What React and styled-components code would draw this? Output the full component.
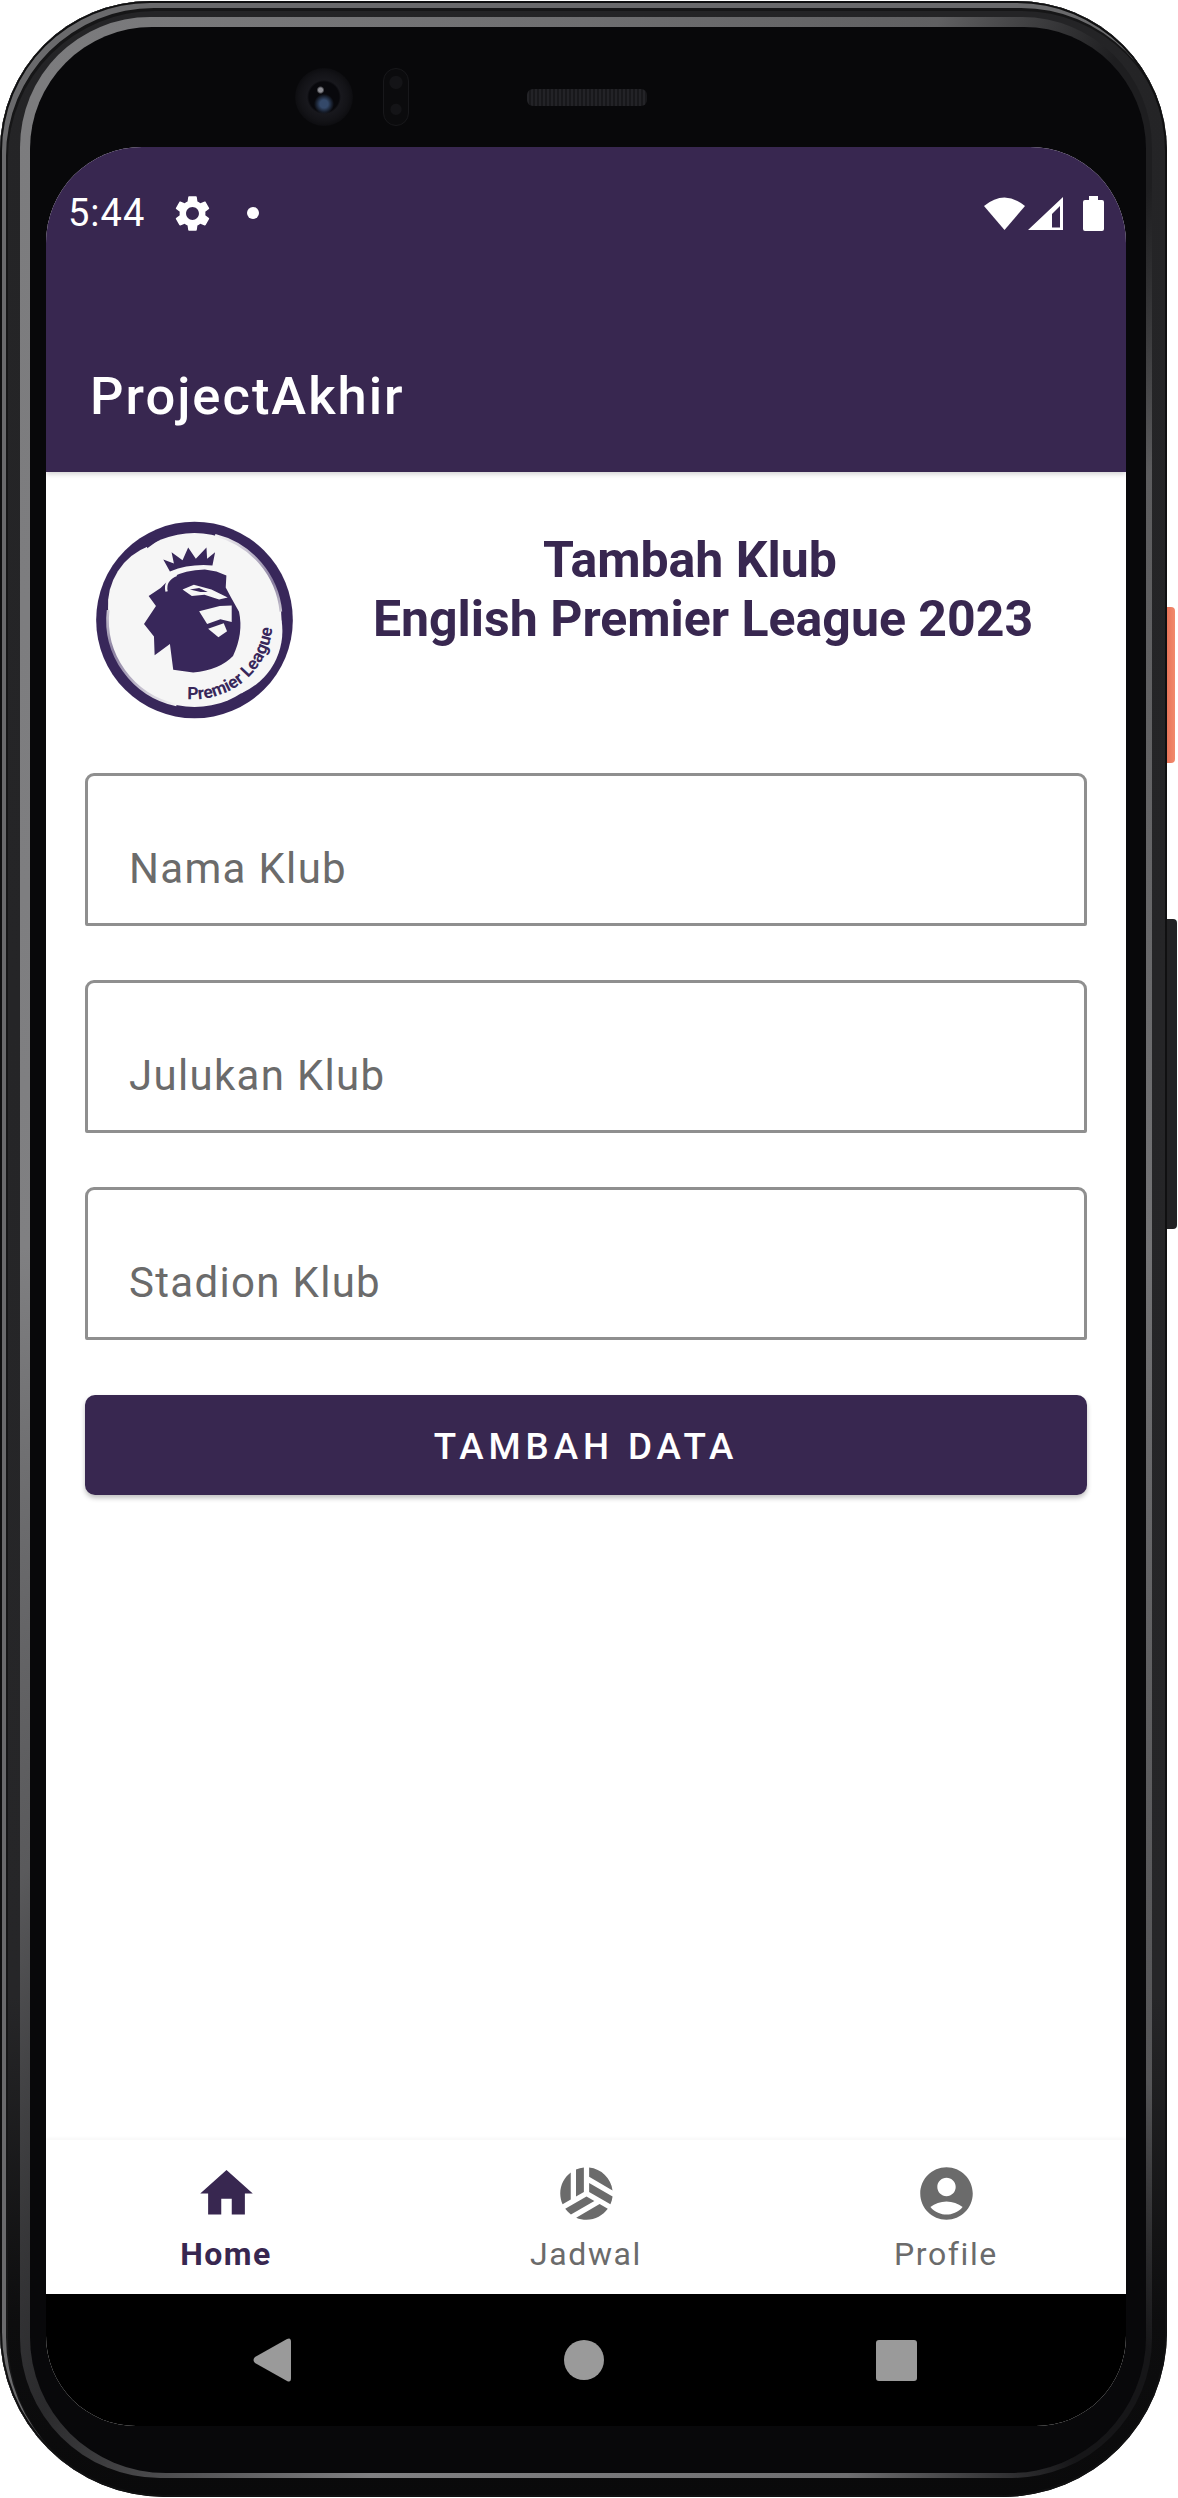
import React from "react";
import styled, { createGlobalStyle } from "styled-components";

const PURPLE = "#382750";
const GREY = "#6b6b6b";

const Global = createGlobalStyle`
  html, body { margin: 0; padding: 0; background: #fff; }
  * { box-sizing: border-box; }
  body { font-family: Roboto, "Liberation Sans", sans-serif; }
`;

const Page = styled.div`
  width: 1178px;
  height: 2498px;
  padding-top: 1px;
  overflow: hidden;
`;
const Shell = styled.div`
  position: relative;
  width: 1167px;
  height: 2496px;
  padding: 16px 15px 19px 20px;
  border-radius: 150px 150px 165px 165px;
  background: linear-gradient(180deg, #242426 0, #262628 80%, #0d0d0e 93%, #0a0a0b 100%);
  box-shadow: inset 0 0 0 2px #101011, inset 4px 5px 0 2px #6a6a6c, inset 5px 7px 0 3px #161617;
`;
const SideKey = styled.div`
  position: absolute;
  left: 100%;
  top: ${(p) => p.$top}px;
  width: ${(p) => p.$w}px;
  height: ${(p) => p.$h}px;
  background: ${(p) => p.$c};
  border-radius: 0 4px 4px 0;
`;
const Bezel = styled.div`
  height: 100%;
  padding: 10px 6px 5px 10px;
  border-radius: 130px 130px 140px 140px;
  background: conic-gradient(
    #6e6e70 0deg,
    #606062 16deg,
    #1e1e20 24deg,
    #1e1e20 28deg,
    #5c5c5e 36deg,
    #747476 90deg,
    #555557 146deg,
    #161618 153deg,
    #161618 158deg,
    #6e6e70 168deg,
    #808082 190deg,
    #2a2a2c 205deg,
    #5a5a5c 222deg,
    #808082 270deg,
    #7c7c7e 335deg,
    #6e6e70 360deg
  );
`;
const Face = styled.div`
  height: 100%;
  padding: 0 20px 47px 16px;
  border-radius: 122px 122px 136px 136px;
  background: #08080a;
  display: flex;
  flex-direction: column;
`;
const Sensors = styled.div`
  height: 120px;
  flex: none;
  padding: 20px 0 0 249px;
  display: flex;
  align-items: center;
`;
const Camera = styled.div`
  width: 58px;
  height: 58px;
  border-radius: 50%;
  background:
    radial-gradient(circle at 44% 38%, #8a8a90 0 2px, transparent 4px),
    radial-gradient(circle at 50% 62%, #34496a 0 4px, transparent 10px),
    radial-gradient(circle at 50% 50%, #08080c 0 15px, #18181d 17px, #131317 24px, #0d0d10 29px);
`;
const Pill = styled.div`
  width: 26px;
  height: 58px;
  margin-left: 30px;
  border-radius: 13px;
  border: 1px solid #18181b;
  background:
    radial-gradient(circle at 50% 24%, #141417 0 6px, transparent 7px),
    radial-gradient(circle at 50% 72%, #141417 0 5px, transparent 6px),
    #0b0b0d;
`;
const Speaker = styled.div`
  width: 120px;
  height: 17px;
  margin-left: 118px;
  border-radius: 6px;
  background: repeating-linear-gradient(90deg, #232327 0 2px, #18181b 2px 4px);
`;
const Screen = styled.div`
  flex: 1;
  min-height: 0;
  border-radius: 96px 96px 90px 90px;
  overflow: hidden;
  display: flex;
  flex-direction: column;
  background: #fff;
`;
const TopArea = styled.header`
  flex: none;
  background: ${PURPLE};
  color: #fff;
  position: relative;
  box-shadow: 0 2px 5px rgba(0, 0, 0, 0.18);
`;
const StatusBar = styled.div`
  height: 132px;
  padding: 0 22px 0 22px;
  display: flex;
  align-items: center;
`;
const Clock = styled.span`
  font-size: 38px;
  font-weight: 400;
  letter-spacing: 1px;
  width: 74px;
`;
const GearWrap = styled.span`
  display: flex;
  margin-left: 29px;
`;
const Dot = styled.span`
  width: 12px;
  height: 12px;
  border-radius: 50%;
  background: #fff;
  margin-left: 33px;
`;
const StatusRight = styled.div`
  margin-left: auto;
  display: flex;
  align-items: center;
`;
const TitleBar = styled.div`
  height: 193px;
  padding: 43px 0 3px 44px;
  display: flex;
  align-items: center;
  font-size: 52.5px;
  font-weight: 500;
  letter-spacing: 2px;
`;
const Content = styled.main`
  flex: 1;
  min-height: 0;
  padding: 0 39px;
  display: flex;
  flex-direction: column;
`;
const Header = styled.div`
  display: flex;
  padding-top: 49px;
  margin-bottom: 54px;
`;
const LogoBox = styled.div`
  flex: none;
  width: 234px;
  padding-left: 11px;
  display: flex;
`;
const Heading = styled.h1`
  flex: 1;
  margin: 10px 0 0;
  text-align: center;
  color: ${PURPLE};
  font-size: 50px;
  line-height: 59px;
  font-weight: 700;
`;
const HeadingTop = styled.span`
  display: block;
  padding-right: 26px;
`;
const Field = styled.div`
  height: 153px;
  margin-bottom: 54px;
  padding: 68px 0 0 41px;
  border: 3px solid #8f8f8f;
  border-radius: 9px 9px 2px 2px;
  color: ${GREY};
  font-size: 42px;
  line-height: 50px;
  letter-spacing: 1.31px;
`;
const Submit = styled.button`
  height: 100px;
  margin-top: 1px;
  padding: 2px 0 0;
  border: 0;
  border-radius: 10px;
  background: ${PURPLE};
  color: #fff;
  font-family: inherit;
  font-size: 36.75px;
  font-weight: 500;
  letter-spacing: 4.9px;
  box-shadow: 0 3px 5px rgba(0, 0, 0, 0.25);
`;
const BottomNav = styled.nav`
  flex: none;
  height: 154px;
  display: grid;
  grid-template-columns: repeat(3, 1fr);
  background: #fff;
  box-shadow: 0 -2px 3px rgba(0, 0, 0, 0.03);
  position: relative;
`;
const NavItem = styled.div`
  padding-top: 22px;
  display: flex;
  flex-direction: column;
  align-items: center;
  color: ${(p) => (p.$active ? PURPLE : GREY)};
`;
const NavLabel = styled.span`
  margin-top: 11px;
  font-size: 32px;
  line-height: 37px;
  letter-spacing: ${(p) => (p.$active ? "1.4px" : "1.6px")};
  font-weight: ${(p) => (p.$active ? 700 : 400)};
`;
const SystemBar = styled.div`
  flex: none;
  height: 132px;
  background: #000;
  padding: 0 209px 0 207px;
  display: flex;
  justify-content: space-between;
  align-items: center;
`;
const HomeDot = styled.div`
  width: 40px;
  height: 40px;
  border-radius: 50%;
  background: #9a9a9a;
`;
const Recent = styled.div`
  width: 41px;
  height: 41px;
  border-radius: 3px;
  background: #9a9a9a;
`;

const Icon = ({ d, size = 63 }) => (
  <svg width={size} height={size} viewBox="0 0 24 24" fill="currentColor" fillRule="evenodd">
    <path d={d} />
  </svg>
);

const GEAR =
  "M19.14 12.94c.04-.3.06-.61.06-.94 0-.32-.02-.64-.07-.94l2.03-1.58c.18-.14.23-.41.12-.61l-1.92-3.32c-.12-.22-.37-.29-.59-.22l-2.39.96c-.5-.38-1.03-.7-1.62-.94l-.36-2.54c-.04-.24-.24-.41-.48-.41h-3.84c-.24 0-.43.17-.47.41l-.36 2.54c-.59.24-1.13.57-1.62.94l-2.39-.96c-.22-.08-.47 0-.59.22L2.74 8.87c-.12.21-.08.47.12.61l2.03 1.58c-.05.3-.09.63-.09.94s.02.64.07.94l-2.03 1.58c-.18.14-.23.41-.12.61l1.92 3.32c.12.22.37.29.59.22l2.39-.96c.5.38 1.03.7 1.62.94l.36 2.54c.05.24.24.41.48.41h3.84c.24 0 .44-.17.47-.41l.36-2.54c.59-.24 1.13-.56 1.62-.94l2.39.96c.22.08.47 0 .59-.22l1.92-3.32c.12-.22.07-.47-.12-.61l-2.01-1.58zM12 15.6c-1.98 0-3.6-1.62-3.6-3.6s1.62-3.6 3.6-3.6 3.6 1.62 3.6 3.6-1.62 3.6-3.6 3.6z";
const HOME = "M10 20v-6h4v6h5v-8h3L12 3 2 12h3v8z";
const ACCOUNT =
  "M12 2C6.48 2 2 6.48 2 12s4.48 10 10 10 10-4.48 10-10S17.52 2 12 2zm0 4c1.93 0 3.5 1.57 3.5 3.5S13.93 13 12 13s-3.5-1.57-3.5-3.5S10.07 6 12 6zm0 14c-2.03 0-4.43-.82-6.14-2.88C7.55 15.8 9.68 15 12 15s4.45.8 6.14 2.12C16.43 19.18 14.03 20 12 20z";
const VOLLEY =
  "M6 4.01C3.58 5.84 2 8.73 2 12c0 1.46.32 2.85.89 4.11L6 14.31V4.01zM11 11.42V2.05c-1.06.11-2.07.38-3 .79v10.32l3-1.74zM12 13.15l-8.11 4.68c.61.84 1.34 1.59 2.18 2.2L15 14.89l-3-1.74zM13 7.96v3.46l8.11 4.68c.42-.93.7-1.93.82-2.98L13 7.96zM8.07 21.2c1.21.51 2.53.8 3.93.8 3.34 0 6.29-1.65 8.11-4.16L17 16.04 8.07 21.2zM21.92 10.81c-.55-4.63-4.26-8.3-8.92-8.76v3.6l8.92 5.16z";

const LION = "#38275a";
const PAPER = "#f6f6f6";

const Logo = () => (
  <svg width="197" height="198" viewBox="78 62 592 596">
    <defs>
      <linearGradient id="sheenA" x1="0" y1="0" x2="1" y2="1">
        <stop offset="0" stopColor={PAPER} />
        <stop offset="0.75" stopColor="#8a7fa0" />
        <stop offset="1" stopColor="#c8c4d0" />
      </linearGradient>
      <linearGradient id="sheenB" x1="0" y1="0" x2="1" y2="1">
        <stop offset="0" stopColor="#c8c4d0" />
        <stop offset="0.25" stopColor="#8a7fa0" />
        <stop offset="1" stopColor={PAPER} />
      </linearGradient>
    </defs>
    <circle cx="374" cy="360" r="296" fill={LION} />
    <circle cx="374" cy="360" r="262" fill={PAPER} />
    <path d="M237 137 A190 190 0 0 0 114 330 Z" fill={PAPER} />
    <path d="M514 581 A205 205 0 0 0 636 360 Z" fill={PAPER} />
    <path d="M114 330 A262 262 0 0 0 320 616" fill="none" stroke="url(#sheenB)" strokeWidth="8" />
    <path d="M436 105 A262 262 0 0 1 634 335" fill="none" stroke="url(#sheenA)" strokeWidth="8" />
    <path d="M226 112 L232 144 L268 118 Z" fill={LION} />
    <path d="M530 584 L516 608 L484 624 Z" fill={LION} />
    <path
      fill={LION}
      d="M280 178 L312 190 L305 156 L338 180 L355 142 L378 176 L410 142 L412 176 L436 156 L428 196 Q360 190 300 214 Z"
    />
    <path
      fill={LION}
      d="M304 232 Q345 210 405 208 L440 214 L470 226 L468 262 L484 292 L508 335 Q522 400 490 468 Q450 510 370 518 L310 510 L300 432 L254 466 L252 410 L222 372 L258 318 L236 288 L272 264 Z"
    />
    <path fill="none" stroke={PAPER} strokeWidth="7" d="M290 274 Q282 240 320 224" />
    <path fill={PAPER} d="M338 268 L372 254 L425 268 L474 292 L448 298 L404 284 L366 288 Z" />
    <path fill={LION} d="M360 268 L388 264 L414 276 L392 276 Z" />
    <path fill={PAPER} d="M388 334 L450 318 L486 316 L486 366 L452 358 L412 372 Z" />
    <path fill={PAPER} d="M415 386 L462 370 L472 394 L446 412 Z" />
    <text fill={LION} fontFamily="Roboto, sans-serif" fontSize="52" fontWeight="700">
      <textPath href="#pl-arc">Premier League</textPath>
    </text>
    <path id="pl-arc" fill="none" d="M352 598 A238 238 0 0 0 606 320" />
  </svg>
);

export default function App() {
  return (
    <Page>
      <Global />
      <Shell>
        <SideKey $top={606} $w={8} $h={156} $c="linear-gradient(90deg,#e9755a,#f28a6d)" />
        <SideKey $top={918} $w={10} $h={310} $c="#222224" />
        <Bezel>
          <Face>
            <Sensors>
              <Camera />
              <Pill />
              <Speaker />
            </Sensors>
            <Screen>
              <TopArea>
                <StatusBar>
                  <Clock>5:44</Clock>
                  <GearWrap>
                    <Icon d={GEAR} size={43} />
                  </GearWrap>
                  <Dot />
                  <StatusRight>
                    <svg width="41" height="34" viewBox="0 0 41 34" fill="#fff">
                      <path d="M0 10 Q20.5 -7 41 10 L20.5 34 Z" />
                    </svg>
                    <svg width="35" height="33" viewBox="0 0 35 33" fill="#fff" fillRule="evenodd" style={{ marginLeft: 3 }}>
                      <path d="M0 33 L35 0 V33 Z M24 30.5 H32 V9 L24 17 Z" />
                    </svg>
                    <svg width="21" height="35" viewBox="0 0 21 35" fill="#fff" style={{ marginLeft: 20 }}>
                      <path d="M6 0 H15 V4 H19 Q21 4 21 6 V33 Q21 35 19 35 H2 Q0 35 0 33 V6 Q0 4 2 4 H6 Z" />
                    </svg>
                  </StatusRight>
                </StatusBar>
                <TitleBar>ProjectAkhir</TitleBar>
              </TopArea>
              <Content>
                <Header>
                  <LogoBox>
                    <Logo />
                  </LogoBox>
                  <Heading>
                    <HeadingTop>Tambah Klub</HeadingTop>
                    English Premier League 2023
                  </Heading>
                </Header>
                <Field>Nama Klub</Field>
                <Field>Julukan Klub</Field>
                <Field>Stadion Klub</Field>
                <Submit>TAMBAH DATA</Submit>
              </Content>
              <BottomNav>
                <NavItem $active>
                  <Icon d={HOME} />
                  <NavLabel $active>Home</NavLabel>
                </NavItem>
                <NavItem>
                  <Icon d={VOLLEY} />
                  <NavLabel>Jadwal</NavLabel>
                </NavItem>
                <NavItem>
                  <Icon d={ACCOUNT} />
                  <NavLabel>Profile</NavLabel>
                </NavItem>
              </BottomNav>
              <SystemBar>
                <svg width="38" height="44" viewBox="0 0 38 44" fill="#9a9a9a">
                  <path d="M34 1 Q38 -1 38 4 V40 Q38 45 34 43 L2 25 Q-1 22 2 19 Z" />
                </svg>
                <HomeDot />
                <Recent />
              </SystemBar>
            </Screen>
          </Face>
        </Bezel>
      </Shell>
    </Page>
  );
}
